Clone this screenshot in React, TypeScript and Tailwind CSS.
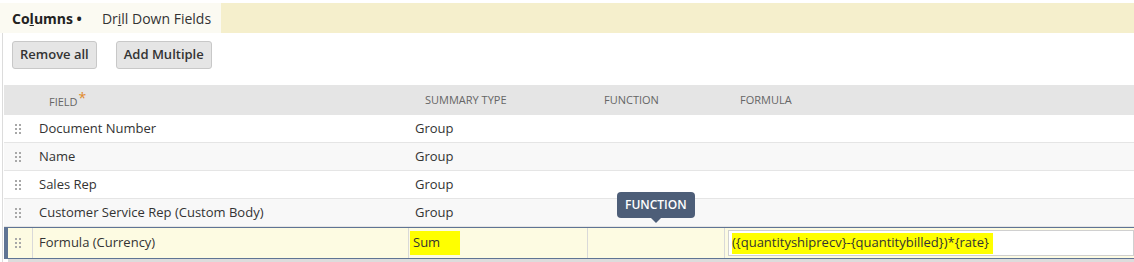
import React from 'react';

const rows = [
  { field: 'Document Number', summary: 'Group' },
  { field: 'Name', summary: 'Group' },
  { field: 'Sales Rep', summary: 'Group' },
  { field: 'Customer Service Rep (Custom Body)', summary: 'Group' },
];

const cols = 'grid grid-cols-[29px_376px_179px_137px_1fr]';

const DragHandle: React.FC = () => (
  <div className="grid grid-cols-2 gap-x-[2px] gap-y-[2px] w-[6px]">
    {[0, 1, 2, 3, 4, 5].map((i) => (
      <span key={i} className="w-[2px] h-[2px] bg-[#a8a8a8]" />
    ))}
  </div>
);

const App: React.FC = () => {
  return (
    <div
      className="w-[1134px] h-[262px] overflow-hidden bg-white text-[13px] text-[#333]"
      style={{ fontFamily: '"Open Sans", Arial, sans-serif' }}
    >
      {/* Tabs */}
      <div className="mt-[3px] h-[30px] flex bg-[#f5efcc]">
        <div className="w-[221px] flex items-center bg-[#fbfaf2] pl-[12px]">
          <span className="font-bold text-[14px] text-[#222]">
            Co<span className="underline">l</span>umns •
          </span>
          <span className="ml-[20px] text-[14px] text-[#333]">
            Dr<span className="underline">i</span>ll Down Fields
          </span>
        </div>
      </div>

      <div className="ml-[2px] border-l border-[#dcdcdc] pl-[1px]">
        {/* Buttons */}
        <div className="flex gap-[19px] pt-[8px] pl-[8px] h-[52px]">
          <button className="h-[28px] px-[7px] rounded-[3px] border border-[#c8c8c8] bg-[#e5e5e5] text-[13px] font-semibold text-[#333]">
            Remove all
          </button>
          <button className="h-[28px] px-[7px] rounded-[3px] border border-[#c8c8c8] bg-[#e5e5e5] text-[13px] font-semibold text-[#333]">
            Add Multiple
          </button>
        </div>

        {/* Header */}
        <div className={`${cols} h-[30px] items-center bg-[#e5e5e5] text-[11px] text-[#666] uppercase`}>
          <div />
          <div className="pl-[16px]">
            Field<span className="text-[#e08a2a] text-[14px] relative top-[-3px] ml-[1px]">*</span>
          </div>
          <div className="pl-[16px]">Summary Type</div>
          <div className="pl-[16px]">Function</div>
          <div className="pl-[15px]">Formula</div>
        </div>

        {/* Rows */}
        {rows.map((r, i) => (
          <div
            key={r.field}
            className={`${cols} h-[28px] items-center border-b border-[#e5e5e5] ${
              i % 2 === 1 ? 'bg-[#f8f8f8]' : 'bg-white'
            }`}
          >
            <div className="pl-[11px]">
              <DragHandle />
            </div>
            <div className="pl-[6px]">{r.field}</div>
            <div className="pl-[6px]">{r.summary}</div>
            <div />
            <div />
          </div>
        ))}

        {/* Selected row */}
        <div className="relative">
          <div className="absolute left-[613px] top-[-35px] flex flex-col items-center">
            <div className="h-[26px] px-[8px] flex items-center rounded-[4px] bg-[#4d5e78] text-white text-[12px] font-semibold">
              FUNCTION
            </div>
            <div className="w-0 h-0 border-x-[5px] border-x-transparent border-t-[5px] border-t-[#4d5e78]" />
          </div>
          <div className="grid grid-cols-[25px_376px_179px_137px_1fr] h-[32px] bg-[#fdfbe2] border-y border-[#5f7494] border-l-[4px] border-l-[#5f7494]">
            <div className="flex items-center pl-[7px] border-r border-[#d9d9d9]">
              <DragHandle />
            </div>
            <div className="flex items-center pl-[6px] border-r border-[#d9d9d9]">Formula (Currency)</div>
            <div className="flex items-center pl-[1px] border-r border-[#d9d9d9]">
              <span className="bg-[#ffff00] h-[24px] w-[50px] flex items-center pl-[3px]">Sum</span>
            </div>
            <div className="border-r border-[#d9d9d9]" />
            <div className="flex items-center pl-[3px]">
              <div className="h-[26px] w-full bg-white border border-[#d0d0d0] flex items-center pl-[3px]">
                <span className="bg-[#ffff00] h-[21px] flex items-center pr-[4px]">
                  {'({quantityshiprecv}-{quantitybilled})*{rate}'}
                </span>
              </div>
            </div>
          </div>
          <div className="h-[10px] bg-[#dcdcdc] ml-[4px]" />
        </div>
      </div>
    </div>
  );
};

export default App;
